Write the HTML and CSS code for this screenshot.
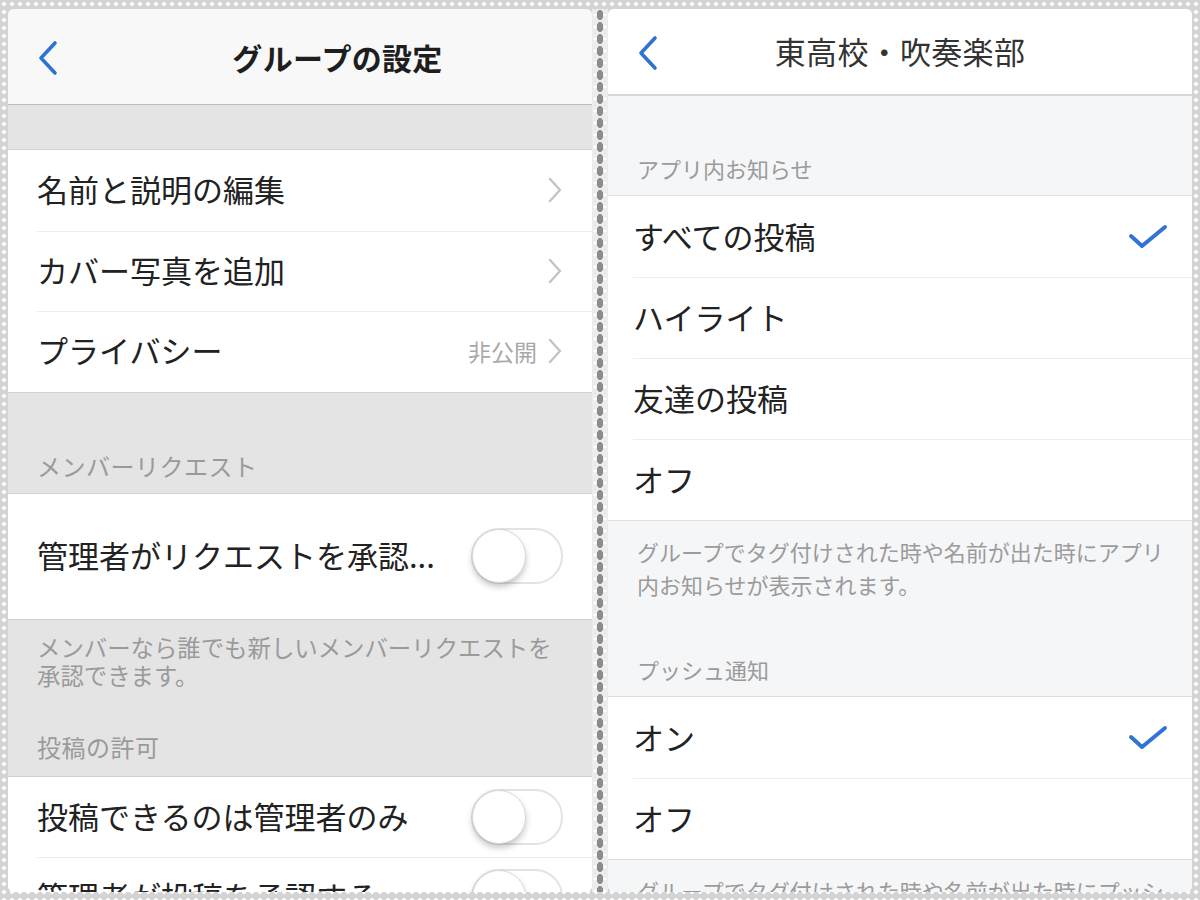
FILE: index.html
```html
<!DOCTYPE html>
<html lang="ja">
<head>
<meta charset="utf-8">
<title>グループの設定</title>
<link rel="stylesheet" href="styles.css">
</head>
<body>
<div class="frame">
  <section class="panel panel-left">
    <header class="nav nav-left">
      <svg class="back" viewBox="0 0 22 36" width="22" height="36"><path d="M18 3 L4 18 L18 33" fill="none" stroke="#2f72d6" stroke-width="3.6" stroke-linecap="round" stroke-linejoin="round"/></svg>
      <h1 class="title title-bold">グループの設定</h1>
    </header>
    <div class="gap-l gap-top"></div>
    <ul class="group">
      <li class="row row-l"><span class="label">名前と説明の編集</span><span class="acc"><svg class="chev" viewBox="0 0 16 28" width="16" height="28"><path d="M3 3 L13 14 L3 25" fill="none" stroke="#c4c4c8" stroke-width="2.4" stroke-linecap="round" stroke-linejoin="round"/></svg></span></li>
      <li class="row row-l"><span class="label">カバー写真を追加</span><span class="acc"><svg class="chev" viewBox="0 0 16 28" width="16" height="28"><path d="M3 3 L13 14 L3 25" fill="none" stroke="#c4c4c8" stroke-width="2.4" stroke-linecap="round" stroke-linejoin="round"/></svg></span></li>
      <li class="row row-l"><span class="label">プライバシー</span><span class="acc"><span class="value">非公開</span><svg class="chev" viewBox="0 0 16 28" width="16" height="28"><path d="M3 3 L13 14 L3 25" fill="none" stroke="#c4c4c8" stroke-width="2.4" stroke-linecap="round" stroke-linejoin="round"/></svg></span></li>
    </ul>
    <div class="gap-l sec-head-l sec-head-tall">メンバーリクエスト</div>
    <ul class="group">
      <li class="row row-l row-tall"><span class="label">管理者がリクエストを承認...</span><span class="toggle"><span class="knob"></span></span></li>
    </ul>
    <div class="gap-l footer-l">
      <p class="note-l">メンバーなら誰でも新しいメンバーリクエストを承認できます。</p>
      <div class="sec-head-l sec-head-inner">投稿の許可</div>
    </div>
    <ul class="group">
      <li class="row row-l"><span class="label">投稿できるのは管理者のみ</span><span class="toggle"><span class="knob"></span></span></li>
      <li class="row row-l"><span class="label">管理者が投稿を承認する</span><span class="toggle"><span class="knob"></span></span></li>
    </ul>
  </section>

  <div class="divider"></div>

  <section class="panel panel-right">
    <header class="nav nav-right">
      <svg class="back" viewBox="0 0 22 36" width="22" height="36"><path d="M18 3 L4 18 L18 33" fill="none" stroke="#2f72d6" stroke-width="3.6" stroke-linecap="round" stroke-linejoin="round"/></svg>
      <h1 class="title title-reg">東高校・吹奏楽部</h1>
    </header>
    <div class="gap-r sec-head-r sec-first">アプリ内お知らせ</div>
    <ul class="group group-r">
      <li class="row row-r"><span class="label">すべての投稿</span><svg class="check" viewBox="0 0 40 28" width="40" height="28"><path d="M3 13 L14 23 L37 4" fill="none" stroke="#3273d8" stroke-width="4" stroke-linecap="round" stroke-linejoin="round"/></svg></li>
      <li class="row row-r"><span class="label">ハイライト</span></li>
      <li class="row row-r"><span class="label">友達の投稿</span></li>
      <li class="row row-r"><span class="label">オフ</span></li>
    </ul>
    <div class="gap-r footer-r">
      <p class="note-r">グループでタグ付けされた時や名前が出た時にアプリ内お知らせが表示されます。</p>
      <div class="sec-head-r sec-head-inner-r">プッシュ通知</div>
    </div>
    <ul class="group group-r">
      <li class="row row-r"><span class="label">オン</span><svg class="check" viewBox="0 0 40 28" width="40" height="28"><path d="M3 13 L14 23 L37 4" fill="none" stroke="#3273d8" stroke-width="4" stroke-linecap="round" stroke-linejoin="round"/></svg></li>
      <li class="row row-r"><span class="label">オフ</span></li>
    </ul>
    <div class="gap-r footer-r">
      <p class="note-r">グループでタグ付けされた時や名前が出た時にプッシュ通知が届きます。</p>
    </div>
  </section>
</div>
</body>
</html>
```

FILE: styles.css
```css
* { box-sizing: border-box; }
html, body { margin: 0; padding: 0; }
body {
  width: 1200px;
  height: 900px;
  overflow: hidden;
  background-color: #d4d4d4;
  background-image: radial-gradient(circle at 4px 4px, #ffffff 0, #ffffff 1.6px, transparent 2.2px);
  background-size: 8px 8px;
  font-family: "Noto Sans CJK JP", "Noto Sans", sans-serif;
  color: #222;
}
.frame {
  display: flex;
  height: 900px;
  padding: 9px 8px 8px 8px;
}
.panel {
  width: 584px;
  height: 883px;
  overflow: hidden;
  border-radius: 6px;
  display: flex;
  flex-direction: column;
  flex: none;
}
.panel-left { background: #e4e4e4; }
.panel-right { background: #f5f6f8; }
.divider {
  width: 16px;
  flex: none;
  background-color: #ececec;
  background-image:
    radial-gradient(ellipse 3.5px 5.5px at 8px 6px, #8c8c8c 0, #8c8c8c 85%, transparent 100%),
    radial-gradient(circle at 3px 6px, #fff 0, #fff 1.2px, transparent 1.8px),
    radial-gradient(circle at 13px 6px, #fff 0, #fff 1.2px, transparent 1.8px);
  background-size: 16px 12px;
}
ul { list-style: none; margin: 0; padding: 0; }
p { margin: 0; }
h1 { margin: 0; }

.nav {
  position: relative;
  display: flex;
  align-items: center;
  justify-content: center;
  flex: none;
}
.nav-left {
  height: 96px;
  background: #f8f8f8;
  border-bottom: 1px solid #bdbdbd;
}
.nav-right {
  height: 87px;
  background: #ffffff;
  border-bottom: 2px solid #d6d6d6;
}
.back {
  position: absolute;
  left: 29px;
  top: 31px;
}
.nav-right .back { top: 26px; }
.title { font-size: 31px; line-height: 40px; }
.title-bold { font-size: 30px; font-weight: 700; color: #1e1e1e; margin: 0 0 0 75px; letter-spacing: 0.3px; }
.title-reg { font-weight: 400; color: #333; margin-top: -2px; letter-spacing: 0.3px; }

.gap-l { background: #e4e4e4; flex: none; }
.gap-top { height: 45px; border-bottom: 1px solid #d2d2d2; }

.group { background: #ffffff; flex: none; }
.row {
  position: relative;
  display: flex;
  align-items: center;
  justify-content: space-between;
  font-size: 31px;
  color: #222;
}
.row-l { height: 80.5px; padding: 0 29px 0 29px; }
.row-l .label { margin-top: -3px; }
.row-l + .row-l::before {
  content: "";
  position: absolute;
  left: 29px; right: 0; top: 0;
  border-top: 1px solid #ececec;
}
.group:has(.row-l) { border-bottom: 1px solid #d2d2d2; }
.row-tall { height: 125px; }
.label { white-space: nowrap; }
.acc { display: flex; align-items: center; gap: 10px; }
.value { font-size: 23px; color: #a8a8a8; }
.chev { display: block; }

.sec-head-l {
  font-size: 24px;
  color: #9a9a9a;
  padding-left: 29px;
  letter-spacing: 0.5px;
}
.sec-head-tall {
  height: 101px;
  display: flex;
  align-items: flex-end;
  padding-bottom: 10px;
  border-bottom: 1px solid #d2d2d2;
}
.footer-l {
  height: 157px;
  padding-top: 13px;
  border-bottom: 1px solid #d2d2d2;
  display: flex;
  flex-direction: column;
  justify-content: space-between;
}
.note-l {
  font-size: 23.4px;
  line-height: 28px;
  color: #9a9a9a;
  padding: 0 30px 0 29px;
}
.sec-head-inner { padding-bottom: 12px; }

.toggle {
  position: relative;
  width: 92px;
  height: 56px;
  border-radius: 28px;
  border: 2px solid #e3e3e3;
  background: #ffffff;
  flex: none;
}
.knob {
  position: absolute;
  left: -1px;
  top: -1px;
  width: 54px;
  height: 54px;
  border-radius: 50%;
  background: #fff;
  border: 1px solid #d8d8d8;
  box-shadow: 0 4px 6px rgba(0,0,0,0.22);
}

.gap-r { background: #f5f6f8; flex: none; }
.sec-head-r {
  font-size: 22px;
  line-height: 30px;
  color: #9b9b9b;
  padding-left: 29px;
}
.sec-first {
  height: 100px;
  display: flex;
  align-items: flex-end;
  padding-bottom: 12px;
  border-bottom: 1px solid #dedede;
}
.group-r { border-bottom: 1px solid #dedede; }
.row-r { height: 81px; padding: 0 24px 0 25px; }
.row-r .label { margin-top: -2px; }
.row-r + .row-r::before {
  content: "";
  position: absolute;
  left: 25px; right: 0; top: 0;
  border-top: 1px solid #ededed;
}
.check { display: block; }
.footer-r {
  height: 176px;
  padding-top: 14px;
  border-bottom: 1px solid #dedede;
  display: flex;
  flex-direction: column;
  justify-content: space-between;
}
.note-r {
  font-size: 22px;
  line-height: 33px;
  color: #9b9b9b;
  padding: 0 16px 0 29px;
}
.sec-head-inner-r { padding-bottom: 12px; }
```
